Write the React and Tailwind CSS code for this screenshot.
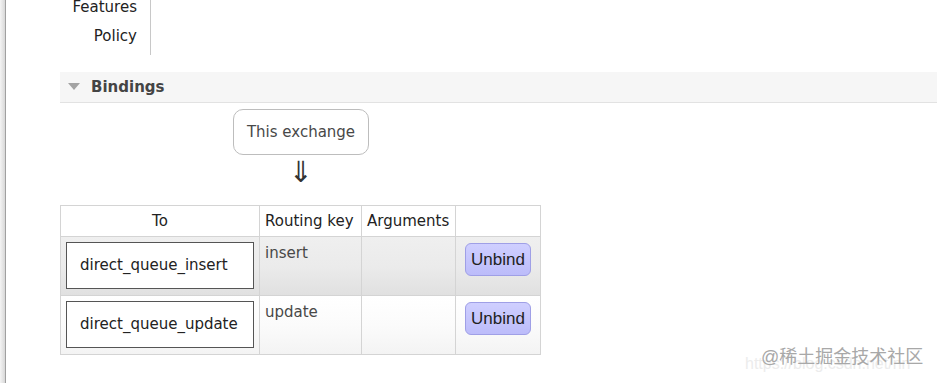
import React from 'react'

const bindings = [
  { queue: 'direct_queue_insert', key: 'insert', row: 'bg-gradient-to-b from-[#efefef] via-[#ebebeb] to-[#e0e0e0]' },
  { queue: 'direct_queue_update', key: 'update', row: 'bg-gradient-to-b from-white via-[#fbfbfb] to-[#f3f3f3]' },
]

export default function App() {
  return (
    <div className="relative flex h-[383px] w-[937px] overflow-hidden bg-white font-['DejaVu_Sans',sans-serif] text-[15px] text-[#484848]">
      {/* left page edge */}
      <div className="w-[5px] bg-gradient-to-r from-[#f4f4f4] to-[#d8d8d8]" />
      <div className="w-px bg-[#a0a0a0]" />

      <div className="flex-1">
        {/* exchange details, cut off at the top */}
        <div className="-mt-[7px] w-[145px] border-r border-[#c8c8c8] pb-[4px] pr-[13px] text-right text-[#222]">
          <div className="h-[29px] leading-[29px]">Features</div>
          <div className="h-[29px] leading-[29px]">Policy</div>
        </div>

        {/* section header */}
        <div className="ml-[54px] mt-[17px] flex h-[31px] items-center border-b border-[#e2e2e2] bg-[#f6f6f6]">
          <svg width="12" height="8" viewBox="0 0 12 8" className="ml-[8px]">
            <polygon points="0,0 12,0 6,7" fill="#a3a3a3" />
          </svg>
          <span className="ml-[11px] font-bold text-[#444]">Bindings</span>
        </div>

        {/* this exchange -> */}
        <div className="ml-[227px] mt-[6px] flex w-[136px] flex-col items-center">
          <div className="flex h-[46px] w-[136px] items-center justify-center rounded-[10px] border border-[#bdbdbd] bg-white">
            This exchange
          </div>
          <div className="mt-[1px] text-[29px] leading-[32px] text-[#333]">⇓</div>
        </div>

        <table className="ml-[54px] mt-[17px] table-fixed border-collapse">
          <colgroup>
            <col className="w-[199px]" />
            <col className="w-[102px]" />
            <col className="w-[94px]" />
            <col className="w-[85px]" />
          </colgroup>
          <thead>
            <tr className="h-[31px] bg-white text-[#222]">
              <th className="border border-[#d4d4d4] text-center font-normal">To</th>
              <th className="border border-[#d4d4d4] px-[5px] text-left font-normal">Routing key</th>
              <th className="border border-[#d4d4d4] px-[5px] text-left font-normal">Arguments</th>
              <th className="border border-[#d4d4d4]"></th>
            </tr>
          </thead>
          <tbody>
            {bindings.map((b) => (
              <tr key={b.queue} className={'h-[59px] ' + b.row}>
                <td className="border border-[#d4d4d4] px-[5px] py-[5px] align-top">
                  <div className="flex h-[47px] w-[188px] items-center border border-[#555] bg-white pl-[13px] text-[#222]">
                    {b.queue}
                  </div>
                </td>
                <td className="border border-[#d4d4d4] px-[5px] pt-[6px] align-top leading-[20px]">{b.key}</td>
                <td className="border border-[#d4d4d4]"></td>
                <td className="border border-[#d4d4d4] align-top">
                  <div className="flex justify-center pt-[6px]">
                    <button className="h-[33px] w-[66px] rounded-[6px] border border-[#9f9fe6] bg-gradient-to-b from-[#cfcfff] to-[#bcbcfa] font-['Liberation_Sans',sans-serif] text-[17px] text-[#222]">
                      Unbind
                    </button>
                  </div>
                </td>
              </tr>
            ))}
          </tbody>
        </table>
      </div>

      {/* watermark */}
      <div className="absolute left-[745px] top-[355px] font-['Liberation_Sans',sans-serif] text-[16px] leading-[18px] text-[#ececec]">
        https://blog.csdn.net/nn
      </div>
      <div className="absolute left-[761px] top-[345px] font-['Liberation_Sans','Noto_Sans_CJK_SC',sans-serif] text-[18px] leading-[24px] text-[#a8a8a8]">
        @稀土掘金技术社区
      </div>
    </div>
  )
}
